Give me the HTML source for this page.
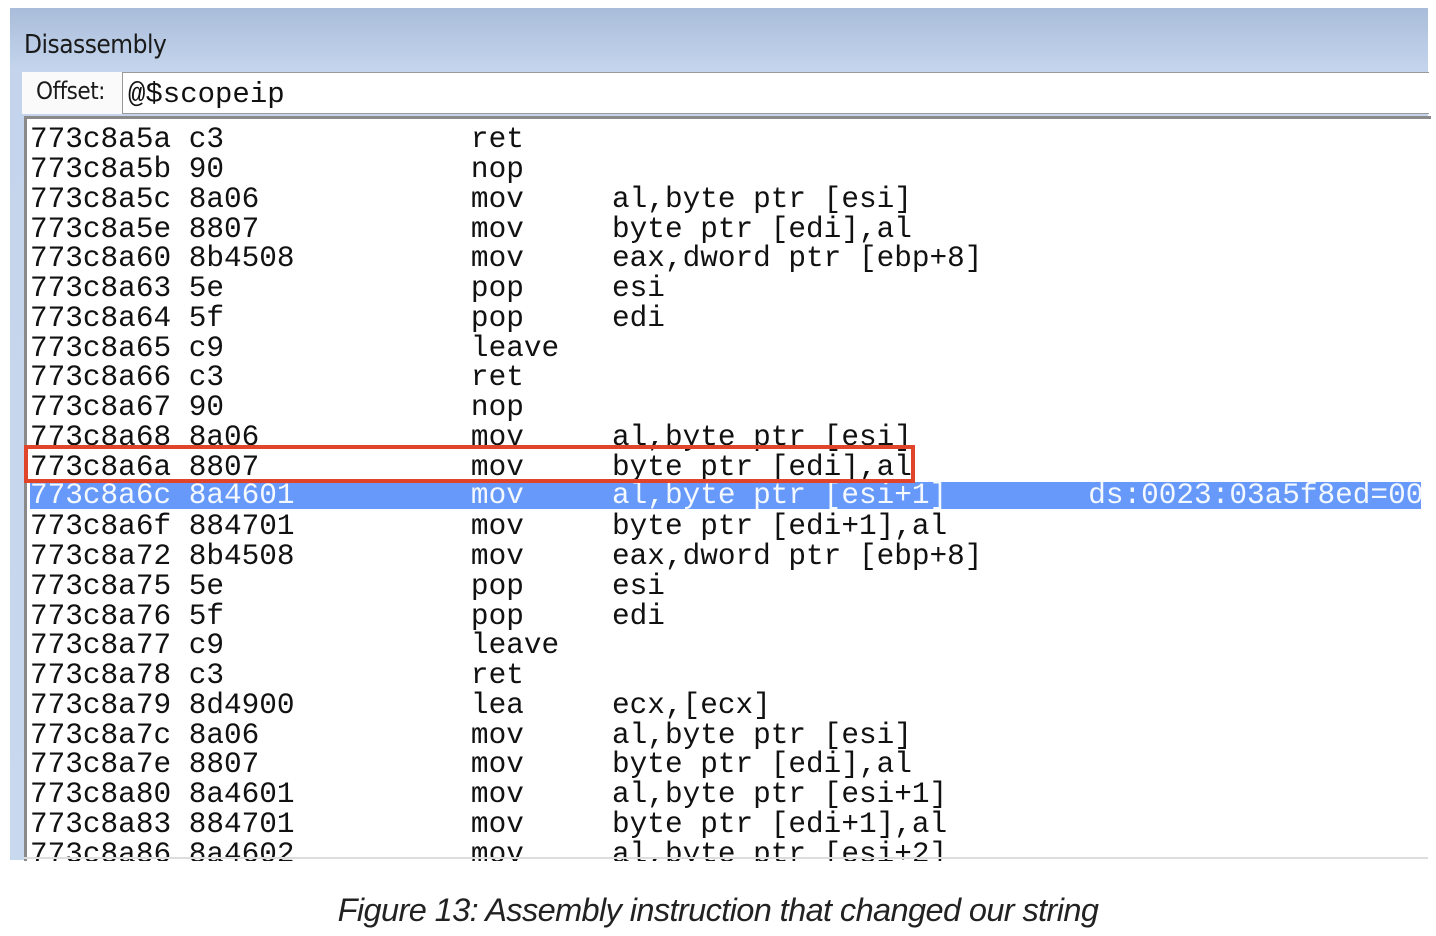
<!DOCTYPE html>
<html><head><style>
body{margin:0;width:1436px;height:936px;background:#fff;position:relative;overflow:hidden;font-family:"Liberation Mono",monospace}
.win{position:absolute;left:10px;top:8px;width:1418px;height:852px;background:linear-gradient(#a9bcd9,#c3d4ec 60px,#c8d8ee);}
.title{position:absolute;left:24px;top:30px;font:26px "DejaVu Sans Condensed","Liberation Sans",sans-serif;color:#1a1a1a;letter-spacing:-0.5px}
.off{position:absolute;left:22px;top:72px;width:100px;height:42px;background:#fafafa}
.offl{position:absolute;left:36px;top:77px;font:24px "DejaVu Sans Condensed","Liberation Sans",sans-serif;color:#1a1a1a;letter-spacing:-0.5px}
.inp{position:absolute;left:122px;top:72px;width:1306px;height:40px;background:#fff;border:1px solid #9a9a9a;border-right:none}
.inpt{position:absolute;left:128px;top:77px;font-size:29px;line-height:36px;color:#111}
.list{position:absolute;left:24px;top:116px;width:1404px;height:742px;background:#fff;border-top:3px solid #8a8a8a;border-left:3px solid #8a8a8a;overflow:hidden}
.r{position:absolute;left:3px;height:30px;font-size:29.4px;line-height:30px;white-space:pre;color:#111}
.hl{background:#6699f9;color:#f4f8ff;width:1391px}
.red{position:absolute;left:24px;top:445px;width:883px;height:30px;border:4px solid #e0452b}
.cap{position:absolute;left:0;width:1436px;top:892px;text-align:center;font:italic 32.5px "Liberation Sans",sans-serif;color:#222;letter-spacing:-0.6px}
.bot{position:absolute;left:24px;top:857px;width:1404px;height:2px;background:#ddd}
</style></head><body>
<div class="win"></div>
<div class="title">Disassembly</div>
<div class="off"></div><div class="offl">Offset:</div>
<div class="inp"></div><div class="inpt">@$scopeip</div>
<div class="list">
<div class="r" style="top:6px">773c8a5a c3              ret</div>
<div class="r" style="top:36px">773c8a5b 90              nop</div>
<div class="r" style="top:66px">773c8a5c 8a06            mov     al,byte ptr [esi]</div>
<div class="r" style="top:96px">773c8a5e 8807            mov     byte ptr [edi],al</div>
<div class="r" style="top:125px">773c8a60 8b4508          mov     eax,dword ptr [ebp+8]</div>
<div class="r" style="top:155px">773c8a63 5e              pop     esi</div>
<div class="r" style="top:185px">773c8a64 5f              pop     edi</div>
<div class="r" style="top:215px">773c8a65 c9              leave</div>
<div class="r" style="top:244px">773c8a66 c3              ret</div>
<div class="r" style="top:274px">773c8a67 90              nop</div>
<div class="r" style="top:304px">773c8a68 8a06            mov     al,byte ptr [esi]</div>
<div class="r" style="top:334px">773c8a6a 8807            mov     byte ptr [edi],al</div>
<div class="r hl" style="top:363px;height:27px;line-height:27px">773c8a6c 8a4601          mov     al,byte ptr [esi+1]        ds:0023:03a5f8ed=00</div>
<div class="r" style="top:393px">773c8a6f 884701          mov     byte ptr [edi+1],al</div>
<div class="r" style="top:423px">773c8a72 8b4508          mov     eax,dword ptr [ebp+8]</div>
<div class="r" style="top:453px">773c8a75 5e              pop     esi</div>
<div class="r" style="top:483px">773c8a76 5f              pop     edi</div>
<div class="r" style="top:512px">773c8a77 c9              leave</div>
<div class="r" style="top:542px">773c8a78 c3              ret</div>
<div class="r" style="top:572px">773c8a79 8d4900          lea     ecx,[ecx]</div>
<div class="r" style="top:602px">773c8a7c 8a06            mov     al,byte ptr [esi]</div>
<div class="r" style="top:631px">773c8a7e 8807            mov     byte ptr [edi],al</div>
<div class="r" style="top:661px">773c8a80 8a4601          mov     al,byte ptr [esi+1]</div>
<div class="r" style="top:691px">773c8a83 884701          mov     byte ptr [edi+1],al</div>
<div class="r" style="top:721px">773c8a86 8a4602          mov     al,byte ptr [esi+2]</div>
</div>
<div class="red"></div>
<div class="bot"></div>
<div class="cap">Figure 13: Assembly instruction that changed our string</div>
</body></html>
